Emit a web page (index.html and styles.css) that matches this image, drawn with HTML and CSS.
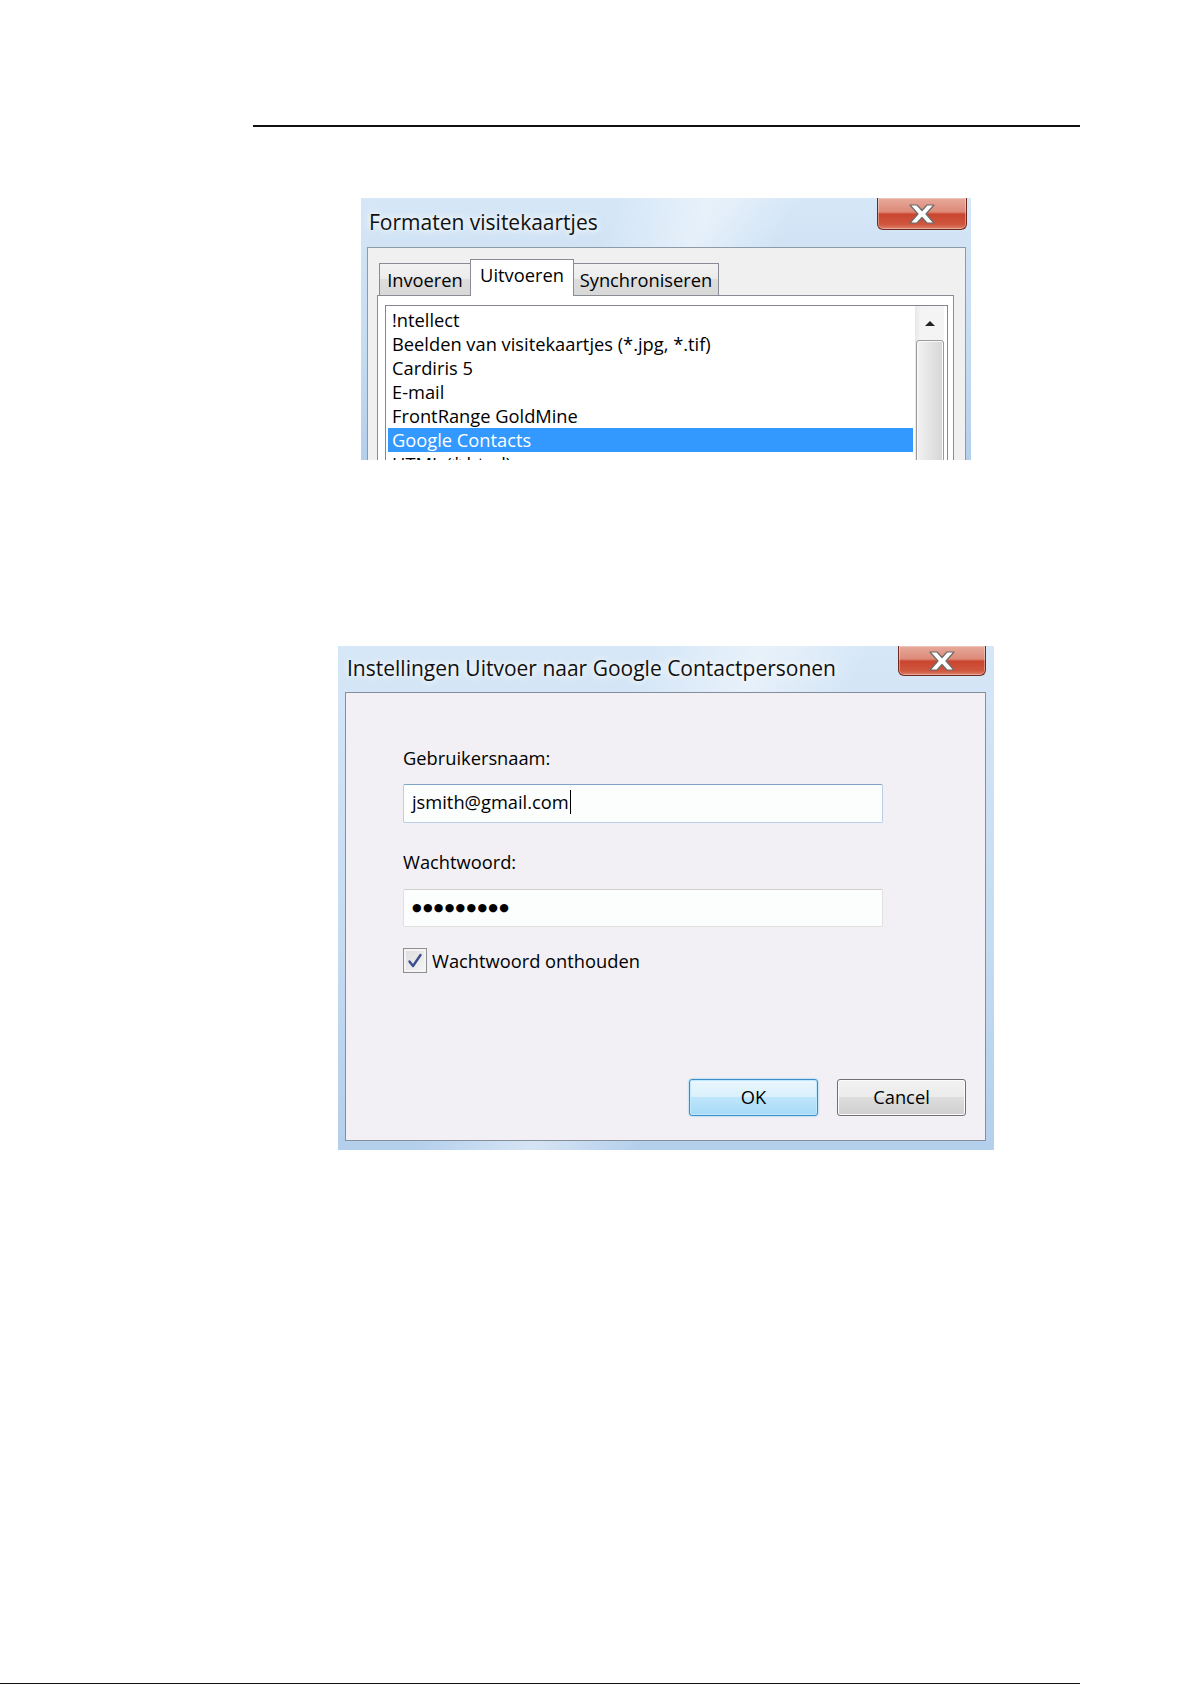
FILE: index.html
```html
<!DOCTYPE html>
<html>

<head>
    <meta charset="utf-8">
    <title>Formaten visitekaartjes</title>
    <link rel="stylesheet" href="styles.css">
</head>

<body>
    <div class="page">
        <div class="rule-top"></div>

        <div class="shot dlg dlg-formats">
            <div class="titlebar">
                <span class="title">Formaten visitekaartjes</span>
                <span class="close">
                    <svg width="26" height="20" viewBox="0 0 26 20">
                        <polygon points="1,1 8,1 13,6.5 18,1 25,1 17,10 25,19 18,19 13,13.5 8,19 1,19 9,10"
                            fill="#fff" stroke="#6b6b6b" stroke-width="1.2" stroke-linejoin="round" />
                    </svg>
                </span>
            </div>
            <div class="client">
                <div class="tabs">
                    <span class="tab tab-in">Invoeren</span>
                    <span class="tab tab-out on">Uitvoeren</span>
                    <span class="tab tab-sync">Synchroniseren</span>
                </div>
                <div class="tabpage">
                    <div class="listbox">
                        <ul class="items">
                            <li>!ntellect</li>
                            <li>Beelden van visitekaartjes (*.jpg, *.tif)</li>
                            <li>Cardiris 5</li>
                            <li>E-mail</li>
                            <li>FrontRange GoldMine</li>
                            <li class="on">Google Contacts</li>
                            <li>HTML (*.html)</li>
                        </ul>
                        <div class="scrollbar">
                            <span class="arrow-up"></span>
                            <span class="thumb"></span>
                        </div>
                    </div>
                </div>
            </div>
        </div>

        <div class="shot dlg dlg-login">
            <div class="titlebar">
                <span class="title">Instellingen Uitvoer naar Google Contactpersonen</span>
                <span class="close">
                    <svg width="26" height="20" viewBox="0 0 26 20">
                        <polygon points="1,1 8,1 13,6.5 18,1 25,1 17,10 25,19 18,19 13,13.5 8,19 1,19 9,10"
                            fill="#fff" stroke="#6b6b6b" stroke-width="1.2" stroke-linejoin="round" />
                    </svg>
                </span>
            </div>
            <div class="client">
                <label class="field-label">Gebruikersnaam:</label>
                <div class="input focus">jsmith@gmail.com<span class="caret"></span></div>
                <label class="field-label label-pw">Wachtwoord:</label>
                <div class="input pw">●●●●●●●●●</div>
                <div class="check-row">
                    <span class="checkbox">
                        <svg width="16" height="16" viewBox="0 0 16 16">
                            <path d="M2.5 8.5 L6 13 L13.5 2" fill="none" stroke="#3b4f8c" stroke-width="2.4"
                                stroke-linecap="round" stroke-linejoin="round" />
                        </svg>
                    </span>
                    <span>Wachtwoord onthouden</span>
                </div>
                <div class="buttons">
                    <span class="btn btn-default">OK</span>
                    <span class="btn">Cancel</span>
                </div>
            </div>
        </div>

        <div class="rule-bottom"></div>
    </div>
</body>

</html>
```

FILE: styles.css
```css
* {
    margin: 0;
    padding: 0;
    box-sizing: border-box;
}

body {
    background: #fff;
    font-family: "Open Sans", "Noto Sans", sans-serif;
    color: #000;
}

.page {
    min-height: 1685px;
    display: flex;
    flex-direction: column;
    padding-top: 125px;
}

.rule-top {
    height: 2px;
    width: 827px;
    margin-left: 253px;
    background: #111;
}

.rule-bottom {
    margin-top: auto;
    margin-bottom: 1px;
    height: 1px;
    width: 1080px;
    background: #111;
}

/* window frames */
.dlg {
    display: flex;
    flex-direction: column;
    overflow: hidden;
    background:
        linear-gradient(115deg, rgba(255, 255, 255, 0) 35%, rgba(255, 255, 255, 0.45) 48%, rgba(255, 255, 255, 0) 60%),
        linear-gradient(180deg, #d6e7f7, #c4dbf1 60%, #b4cfec);
}

.dlg-formats {
    width: 610px;
    height: 262px;
    margin: 71px 0 0 361px;
}

.dlg-login {
    width: 656px;
    height: 504px;
    margin: 186px 0 0 338px;
}

.titlebar {
    display: flex;
    justify-content: space-between;
    align-items: flex-start;
    flex: none;
}

.title {
    font-size: 21px;
    line-height: 28px;
    color: #111;
    text-shadow: 0 0 6px #fff, 0 0 10px #fff;
    white-space: nowrap;
}

.close {
    display: flex;
    align-items: center;
    justify-content: center;
    border: 1px solid #6e2a20;
    border-top: none;
    border-radius: 0 0 6px 6px;
    background: linear-gradient(180deg, #e7a99b, #dd8a78 45%, #c9452f 52%, #d0563e 85%, #dd8068);
    box-shadow: inset 0 0 0 1px rgba(255, 255, 255, 0.35);
}

.dlg-formats .titlebar {
    height: 49px;
    padding-left: 8px;
}

.dlg-formats .title {
    margin-top: 10px;
}

.dlg-formats .close {
    width: 90px;
    height: 32px;
    margin-right: 4px;
}

.dlg-login .titlebar {
    height: 46px;
    padding-left: 9px;
}

.dlg-login .title {
    margin-top: 8px;
}

.dlg-login .close {
    width: 88px;
    height: 30px;
    margin-right: 8px;
}

.dlg .client {
    font-size: 18.3px;
    line-height: 24px;
}

/* formats dialog */
.dlg-formats .client {
    flex: 1;
    margin: 0 5px 0 6px;
    border: 1px solid #8d9aa8;
    border-bottom: none;
    background: #f0f0f0;
    padding: 11px 11px 0 9px;
    display: flex;
    flex-direction: column;
}

.tabs {
    display: flex;
    align-items: flex-end;
    height: 36px;
    margin-left: 2px;
    position: relative;
    z-index: 1;
}

.tab {
    height: 32px;
    border: 1px solid #898c95;
    border-bottom: none;
    background: linear-gradient(180deg, #f3f3f3, #ebebeb 50%, #dddddd 50%, #d8d8d8);
    text-align: center;
    line-height: 30px;
    padding-top: 1px;
    white-space: nowrap;
}

.tab-in {
    width: 92px;
}

.tab-out {
    width: 104px;
    margin: 0 -1px;
}

.tab-sync {
    width: 146px;
}

.tab.on {
    height: 37px;
    margin-bottom: -1px;
    background: #fff;
    line-height: 30px;
    padding-top: 0;
    position: relative;
    z-index: 2;
}

.tabpage {
    flex: 1;
    border: 1px solid #898c95;
    border-bottom: none;
    background: #fff;
    padding: 9px 5px 0 7px;
}

.listbox {
    display: flex;
    height: 200px;
    border: 1px solid #828790;
    padding-top: 2px;
}

.items {
    flex: 1;
    list-style: none;
    margin-left: 2px;
}

.items li {
    height: 24px;
    padding-left: 4px;
    white-space: nowrap;
}

.items li.on {
    background: #3399ff;
    color: #fff;
}

.scrollbar {
    width: 29px;
    margin: -2px 3px 0 2px;
    background: linear-gradient(90deg, #e8e8e8, #f4f4f4 20%, #f4f4f4);
    display: flex;
    flex-direction: column;
    align-items: center;
}

.arrow-up {
    margin: 15px 0 14px;
    width: 0;
    height: 0;
    border-left: 5px solid transparent;
    border-right: 5px solid transparent;
    border-bottom: 5px solid #222;
}

.thumb {
    width: 28px;
    height: 140px;
    border: 1px solid #9a9a9a;
    border-radius: 3px;
    background: linear-gradient(90deg, #f2f2f2, #e4e4e4 50%, #d6d6d6);
    box-shadow: inset 0 0 0 1px #fafafa;
}

/* google login dialog */
.dlg-login .client {
    height: 449px;
    margin: 0 8px 0 7px;
    border: 1px solid #858f9b;
    background: #f2f0f4;
    padding: 53px 19px 24px 57px;
    display: flex;
    flex-direction: column;
}

.field-label {
    display: block;
    height: 24px;
}

.input {
    width: 480px;
    height: 39px;
    margin-top: 14px;
    padding: 0 0 4px 8px;
    display: flex;
    align-items: center;
    background: #fcfdfd;
    border: 1px solid #b8cfe6;
    border-top-color: #7fa3c9;
    border-radius: 2px;
    white-space: nowrap;
}

.caret {
    display: inline-block;
    width: 1px;
    height: 24px;
    margin-left: 1px;
    background: #000;
}

.label-pw {
    margin-top: 27px;
}

.input.pw {
    height: 38px;
    margin-top: 15px;
    border-color: #e0e0e0;
    border-top-color: #cfcfcf;
    padding: 0 0 0 8px;
    font-family: "DejaVu Sans", sans-serif;
    font-size: 11px;
    letter-spacing: 1.3px;
}

.check-row {
    display: flex;
    align-items: center;
    margin-top: 21px;
}

.checkbox {
    width: 24px;
    height: 25px;
    margin-right: 5px;
    border: 1px solid #8e8f8f;
    background: linear-gradient(135deg, #dcdcdc, #f6f6f6);
    box-shadow: inset 0 0 0 2px #f4f4f4;
    display: flex;
    align-items: center;
    justify-content: center;
}

.buttons {
    margin-top: auto;
    display: flex;
    justify-content: flex-end;
    gap: 19px;
}

.btn {
    width: 129px;
    height: 37px;
    border: 1px solid #707070;
    border-radius: 3px;
    background: linear-gradient(180deg, #f2f2f2, #ebebeb 50%, #dddddd 50%, #cfcfcf);
    box-shadow: inset 0 0 0 1px #fcfcfc;
    display: flex;
    align-items: center;
    justify-content: center;
    padding-bottom: 1px;
}

.btn-default {
    border-color: #3c8ec8;
    background: linear-gradient(180deg, #eaf6fd, #d9f0fc 50%, #bee6fd 50%, #a7d9f5);
    box-shadow: inset 0 0 0 1px #bfe9ff, 0 0 2px #6ec0ef;
}
```
